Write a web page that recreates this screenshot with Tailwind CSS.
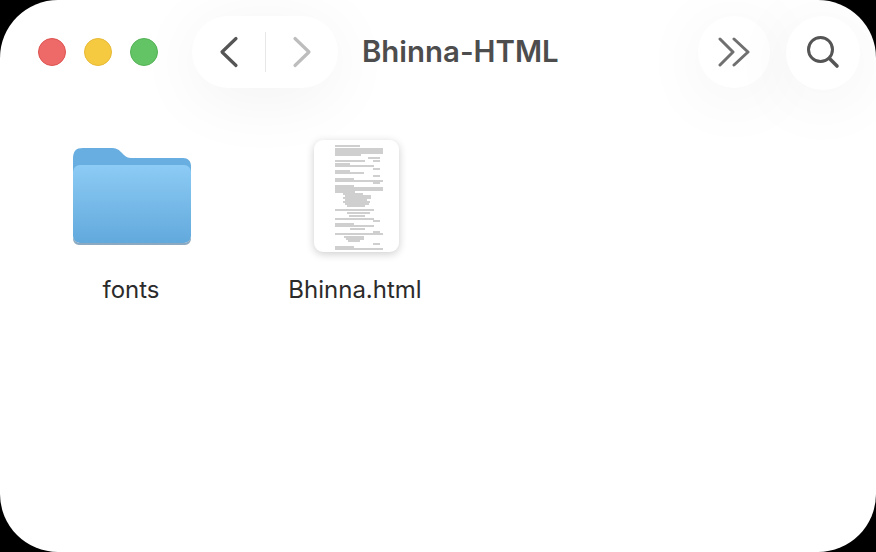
<!DOCTYPE html>
<html lang="en">
<head>
  <meta charset="UTF-8">
  <title>Bhinna-HTML</title>
  <script src="https://cdn.jsdelivr.net/npm/@tailwindcss/browser@4"></script>
</head>
<body class="bg-black font-['Inter',sans-serif] overflow-hidden">
  <div class="w-[876px] h-[552px] bg-white rounded-[58px] overflow-hidden">
    <!-- Toolbar -->
    <div class="h-[104px] flex items-start pt-4 pl-[38px] pr-4">
      <div class="flex items-center gap-[18px] h-[72px]">
        <div class="size-7 rounded-full bg-[#ee6a69] border border-[#dc5350]"></div>
        <div class="size-7 rounded-full bg-[#f5c940] border border-[#e6b935]"></div>
        <div class="size-7 rounded-full bg-[#62c465] border border-[#53b256]"></div>
      </div>
      <div class="ml-[34px] w-[146px] h-[72px] rounded-full bg-white shadow-[0_10px_70px_rgba(0,0,0,0.06)] flex items-center">
        <div class="w-[73px] flex justify-center">
          <svg width="20" height="32" viewBox="0 0 20 32" fill="none" stroke="#555555" stroke-width="3.2" stroke-linecap="round" stroke-linejoin="round"><path d="M17 2.5 3 16l14 13.5"/></svg>
        </div>
        <div class="w-px h-10 bg-[#e8e8e8]"></div>
        <div class="flex-1 flex justify-center">
          <svg width="20" height="32" viewBox="0 0 20 32" fill="none" stroke="#bdbdbd" stroke-width="3.2" stroke-linecap="round" stroke-linejoin="round"><path d="M3 2.5 17 16 3 29.5"/></svg>
        </div>
      </div>
      <h1 class="ml-6 h-[72px] leading-[72px] text-[29.4px] font-semibold text-[#4d4d4d]">Bhinna-HTML</h1>
      <div class="ml-auto flex gap-4">
        <div class="size-[72px] rounded-full bg-white shadow-[0_10px_70px_rgba(0,0,0,0.06)] flex items-center justify-center">
          <svg width="32" height="30" viewBox="0 0 32 30" fill="none" stroke="#707070" stroke-width="3" stroke-linecap="round" stroke-linejoin="round"><path d="M2 2l13 13L2 28M16 2l14 13-14 13"/></svg>
        </div>
        <div class="size-[74px] rounded-full bg-white shadow-[0_10px_70px_rgba(0,0,0,0.06)] flex items-center justify-center pb-[2px]">
          <svg width="34" height="34" viewBox="0 0 34 34" fill="none" stroke="#555555" stroke-width="3" stroke-linecap="round"><circle cx="14.5" cy="14.5" r="12"/><path d="M23.5 23.5 31 31" stroke-width="3.6"/></svg>
        </div>
      </div>
    </div>

    <!-- Files -->
    <div class="flex pl-[61px] pt-[36px]">
      <div class="w-[140px] flex flex-col items-center">
        <div class="h-[112px] flex items-center pl-[2px]">
          <svg width="120" height="98" viewBox="0 0 120 98" fill="none">
            <defs>
              <linearGradient id="front" x1="0" y1="0" x2="0" y2="1"><stop offset="0" stop-color="#8ccbf5"/><stop offset="1" stop-color="#62a9dc"/></linearGradient>
            </defs>
            <path d="M1 12C1 4 4 1 11 1h28c5 0 7 1 10 4l3 3c2 2 4 3 7 3h52c5 0 8 3 8 8v60H1z" fill="#68aee0"/>
            <rect x="1" y="18" width="118" height="78" rx="7" fill="url(#front)"/>
            <path d="M8 96h104a7 7 0 0 0 7-6v2a6 6 0 0 1-6 6H7a6 6 0 0 1-6-6v-2a7 7 0 0 0 7 6z" fill="#8ba9c0"/>
          </svg>
        </div>
        <span class="mt-6 text-[24px] leading-7 text-[#2b2b2b]">fonts</span>
      </div>
      <div class="ml-[84px] w-[140px] flex flex-col items-center">
        <div class="ml-[3px] w-[85px] h-[112px] bg-white rounded-[9px] shadow-[0_2px_8px_rgba(0,0,0,0.2)] overflow-hidden">
          <svg width="85" height="112" viewBox="0 0 85 112" stroke="#777777" stroke-width="0.7" fill="none">
            <path d="M21 6h25M21 9h48M21 11h48M21 13h48M21 15h26M54 18h12"/>
            <path d="M21 21h30M59 21h7M21 24h15M21 26h39M59 29h7M21 31h15M21 33h29M59 36h7"/>
            <path d="M21 39h19M21 41h48M59 43h7M21 46h19M21 48h48M21 50h48M21 52h20"/>
            <path d="M29 54h20M31 56h26M29 58h28M31 60h22M29 62h27M31 64h24M33 66h18"/>
            <path d="M21 70h39M33 73h23M35 76h16M21 79h39M59 81h7"/>
            <path d="M21 84h19M21 86h39M36 89h15M59 92h7M21 94h48M30 97h20M32 99h18M34 101h12M59 104h7M21 107h19M21 109h48"/>
          </svg>
        </div>
        <span class="mt-[24px] text-[24px] leading-7 text-[#2b2b2b]">Bhinna.html</span>
      </div>
    </div>
  </div>
</body>
</html>
